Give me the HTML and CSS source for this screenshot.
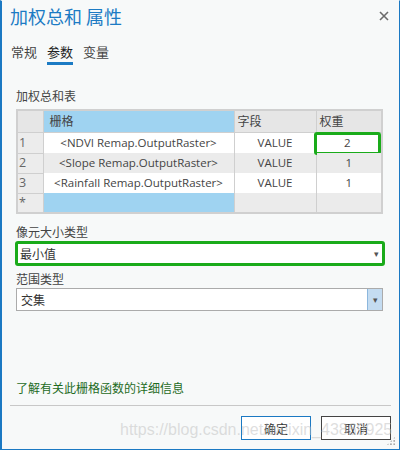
FILE: index.html
```html
<!DOCTYPE html>
<html lang="zh-CN">
<head>
  <meta charset="UTF-8" />
  <title>加权总和 属性</title>
  <link rel="stylesheet" href="styles.css">
</head>
<body>
  <div class="window">
    <div class="titlebar">
      <span class="title">加权总和 属性</span>
      <svg class="close" width="10" height="10" viewBox="0 0 10 10">
        <path d="M1 1 L9 9 M9 1 L1 9" stroke="#6b6b6b" stroke-width="1.6" fill="none"/>
      </svg>
    </div>
    <div class="tabs">
      <span class="tab">常规</span>
      <span class="tab active">参数</span>
      <span class="tab">变量</span>
    </div>

    <div class="content">
      <div class="label">加权总和表</div>
      <table class="grid">
        <tr class="head">
          <th class="num"></th>
          <th class="raster">栅格</th>
          <th class="field">字段</th>
          <th class="weight">权重</th>
        </tr>
        <tr class="first">
          <td class="num">1</td>
          <td class="raster">&lt;NDVI Remap.OutputRaster&gt;</td>
          <td class="field">VALUE</td>
          <td class="weight"><span class="mark">2</span></td>
        </tr>
        <tr class="alt">
          <td class="num">2</td>
          <td class="raster">&lt;Slope Remap.OutputRaster&gt;</td>
          <td class="field">VALUE</td>
          <td class="weight">1</td>
        </tr>
        <tr>
          <td class="num">3</td>
          <td class="raster">&lt;Rainfall Remap.OutputRaster&gt;</td>
          <td class="field">VALUE</td>
          <td class="weight">1</td>
        </tr>
        <tr class="new">
          <td class="num">*</td>
          <td class="raster"></td>
          <td class="field"></td>
          <td class="weight"></td>
        </tr>
      </table>

      <div class="label cell-label">像元大小类型</div>
      <div class="select marked">
        <span>最小值</span>
        <span class="arrow">&#x25BE;</span>
      </div>

      <div class="label extent-label">范围类型</div>
      <div class="select">
        <span>交集</span>
        <span class="arrow-btn"><span class="arrow">&#x25BE;</span></span>
      </div>
    </div>

    <a class="help">了解有关此栅格函数的详细信息</a>
    <div class="footer">
      <button class="btn primary">确定</button>
      <button class="btn">取消</button>
    </div>
    <div class="watermark">https://blog.csdn.net/weixin_43869925</div>
    <div class="grip"></div>
  </div>
</body>
</html>
```

FILE: styles.css
```css
* {
  box-sizing: border-box;
}

body {
  margin: 0;
  padding: 0;
  font-family: "Noto Sans CJK SC", "Noto Sans", sans-serif;
  color: #333;
}

.window {
  position: relative;
  width: 400px;
  height: 450px;
  background: #f7f9f9;
  border: 1px solid #1b79c3;
  border-left-width: 2px;
  border-top-color: #f7f9f9;
  display: flex;
  flex-direction: column;
  overflow: hidden;
}

.titlebar {
  display: flex;
  justify-content: space-between;
  align-items: center;
  height: 30px;
  padding: 0 10px 0 8px;
}

.title {
  font-size: 18px;
  color: #1c7bc4;
}

.close {
  display: block;
}

.tabs {
  display: flex;
  gap: 10px;
  padding: 11px 0 0 9px;
  height: 37px;
}

.tab {
  font-size: 13px;
  line-height: 20px;
  height: 23px;
  color: #444;
}

.tab.active {
  border-bottom: 3px solid #1c7bc4;
  color: #222;
}

.content {
  padding: 19px 14px 0 14px;
}

.label {
  font-size: 12px;
  line-height: 18px;
  color: #444;
  margin-bottom: 4px;
}

.cell-label {
  margin-top: 9px;
  margin-bottom: 0;
}

.extent-label {
  margin-bottom: 0;
}

.grid {
  border-collapse: collapse;
  width: 367px;
  font-family: "Open Sans", "Noto Sans CJK SC", sans-serif;
  font-size: 11.5px;
  line-height: 14px;
  color: #444;
  border: 2px solid #d0d0d0;
}

.grid tr {
  height: 20px;
}

.grid tr.head {
  height: 22px;
}

.grid tr.first {
  height: 21px;
}

.grid th,
.grid td {
  border: 1px solid #cfcfcf;
  padding: 0 3px;
  font-weight: normal;
}

.grid .head th {
  background: #e6e6e6;
  text-align: left;
  font-family: "Noto Sans CJK SC", sans-serif;
  font-size: 12px;
}

.grid .head th.raster {
  background: #9fd3f1;
  padding-left: 6px;
}

.grid .num {
  width: 26px;
  background: #ececec;
  text-align: left;
  padding-left: 1px;
  font-size: 12.5px;
  color: #666;
}

.grid td.raster,
.grid td.field,
.grid td.weight {
  text-align: center;
  background: #fff;
  border-left: none;
  border-right: 1px solid #cfcfcf;
  border-top: none;
  border-bottom: none;
}

.grid .alt td.raster,
.grid .alt td.field,
.grid .alt td.weight {
  background: #ebebeb;
}

.grid .raster {
  width: 191px;
}

.grid .field {
  width: 82px;
}

.grid .new td.raster {
  background: #9fd3f1;
}

.grid .new td.field,
.grid .new td.weight {
  background: #ebebeb;
}

.grid td.weight {
  position: relative;
}

.mark {
  position: absolute;
  left: -3px;
  top: -1px;
  right: 0;
  bottom: -2px;
  border: 3px solid #1aab1a;
  border-radius: 3px;
  display: flex;
  align-items: center;
  justify-content: center;
  background: #fff;
}

.select {
  display: flex;
  justify-content: space-between;
  align-items: center;
  width: 367px;
  height: 23px;
  background: #fff;
  border: 1px solid #ababab;
  font-size: 12px;
  color: #333;
  padding-left: 4px;
}

.select.marked {
  height: 25px;
  border: 3px solid #1aab1a;
  border-radius: 3px;
  padding-left: 2px;
  margin-left: -1px;
  width: 370px;
  margin-bottom: 4px;
}

.arrow {
  font-size: 9px;
  color: #555;
  padding-right: 3px;
}

.arrow-btn {
  width: 15px;
  height: 100%;
  background: #c4dcf1;
  border-left: 1px solid #8cb7dd;
  display: flex;
  align-items: center;
  justify-content: center;
}

.arrow-btn .arrow {
  padding: 0;
}

.help {
  margin-top: auto;
  padding: 0 14px;
  font-size: 12px;
  color: #1e6b1e;
  line-height: 18px;
}

.footer {
  display: flex;
  justify-content: flex-end;
  gap: 10px;
  margin: 8px 8px 0 8px;
  padding: 10px 0 9px 0;
  border-top: 1px solid #c8c8c8;
}

.btn {
  width: 70px;
  height: 24px;
  background: #fff;
  border: 1px solid #444;
  font-family: "Noto Sans CJK SC", sans-serif;
  font-size: 12px;
  color: #333;
  padding: 0;
}

.btn.primary {
  border-color: #1b79c3;
}

.watermark {
  position: absolute;
  left: 118px;
  top: 420px;
  font-family: "Liberation Sans", sans-serif;
  font-size: 16px;
  line-height: 18px;
  color: rgba(190, 190, 190, 0.5);
  white-space: nowrap;
  pointer-events: none;
}

.grip {
  position: absolute;
  right: 3px;
  bottom: 3px;
  width: 10px;
  height: 10px;
  background-image: radial-gradient(circle, #aaa 1px, transparent 1.3px);
  background-size: 3.3px 3.3px;
  clip-path: polygon(100% 0, 100% 100%, 0 100%);
}
```
